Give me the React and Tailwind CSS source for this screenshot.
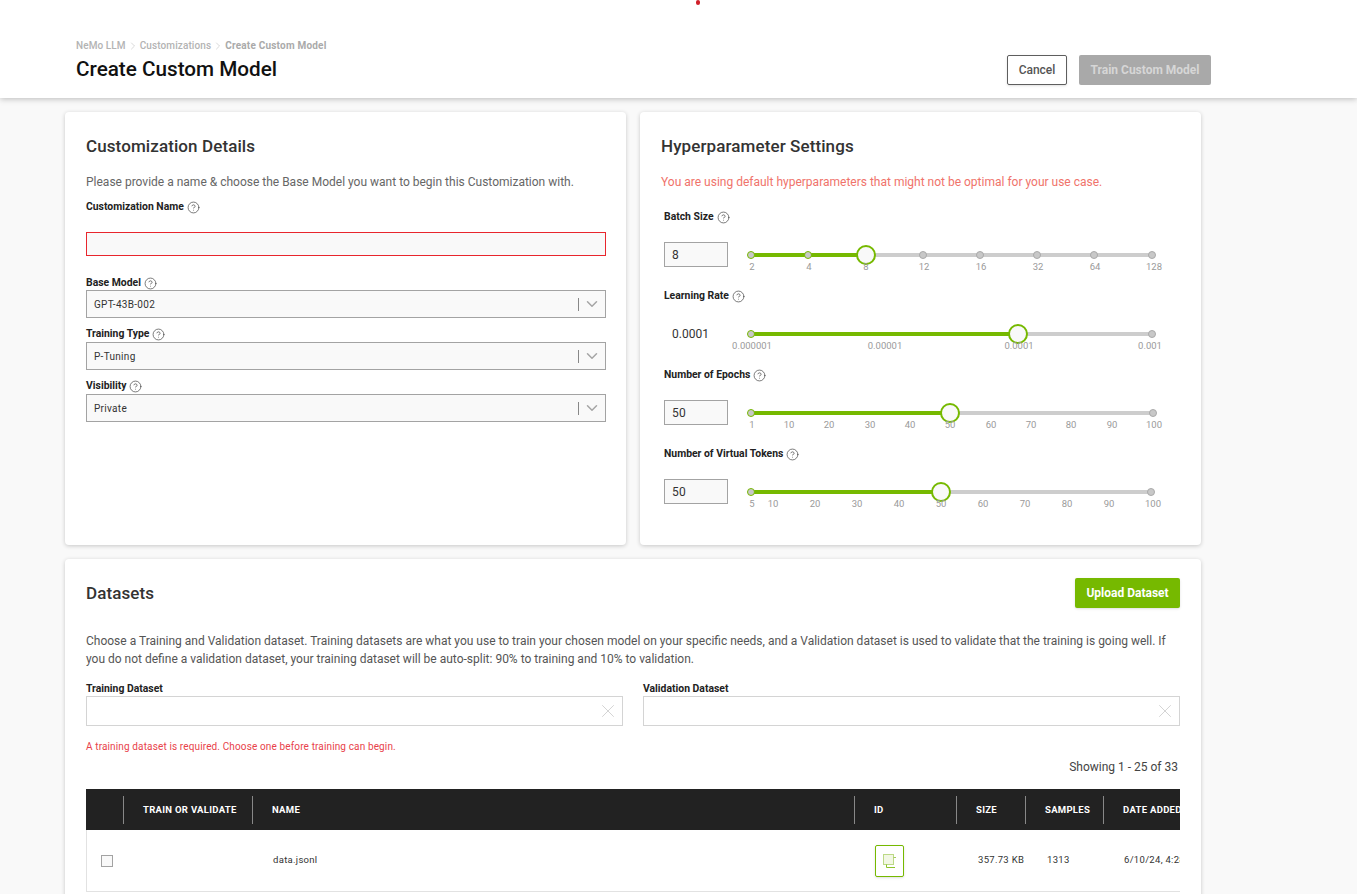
import React from "react";
import { ChevronRight, ChevronDown, CircleHelp, X } from "lucide-react";

const font = { fontFamily: "Roboto, sans-serif" };

const Help = () => <CircleHelp size={13} strokeWidth={1.3} className="text-[#444] ml-[3px] shrink-0" />;

const Label = ({ children, className = "" }) => (
  <div className={`flex items-center text-[10.4px] leading-[14px] font-bold text-[#222] ${className}`}>
    {children}
    <Help />
  </div>
);

const Select = ({ value }) => (
  <div className="flex items-center h-[28px] border border-[#a3a3a3] bg-[#f9f9f9] pl-[7px] text-[10px] tracking-[0.3px] text-[#333]">
    <span className="flex-1">{value}</span>
    <span className="w-px h-[13px] bg-[#888]" />
    <ChevronDown size={18} strokeWidth={2} className="text-[#a5a5a5] mx-[4px]" />
  </div>
);

const pct = (x, from, to) => ((x - from) / (to - from)) * 100;

// x values below are page pixels, turned into percentages of the track
const Slider = ({ from, to, thumb, marks, labels }) => (
  <div className="relative h-[30px]" style={{ width: to - from }}>
    <div className="absolute left-0 right-0 top-[8px] h-[4px] bg-[#cdcdcd]" />
    <div className="absolute left-0 top-[8px] h-[4px] bg-[#76b900]" style={{ width: `${pct(thumb, from, to)}%` }} />
    {marks.map((m) => (
      <span
        key={m}
        className={`absolute top-[6px] w-[8px] h-[8px] -ml-[4px] rounded-full bg-[#c8c8c8] border ${m <= thumb ? "border-[#76b900]" : "border-[#aaa]"}`}
        style={{ left: `${pct(m, from, to)}%` }}
      />
    ))}
    <span
      className="absolute top-0 w-[20px] h-[20px] -ml-[10px] rounded-full bg-[#f9f9f9] border-2 border-[#76b900]"
      style={{ left: `${pct(thumb, from, to)}%` }}
    />
    {labels.map(([t, x]) => (
      <span
        key={t}
        className="absolute top-[16px] -translate-x-1/2 text-[9.5px] leading-[12px] text-[#9a9a9a]"
        style={{ left: `${pct(x, from, to)}%` }}
      >
        {t}
      </span>
    ))}
  </div>
);

const ParamRow = ({ label, value, boxed = true, ...slider }) => (
  <div>
    <Label className="ml-[3px]">{label}</Label>
    <div className="flex items-start mt-[19px]">
      {boxed ? (
        <div className="w-[64px] h-[25px] border border-[#a3a3a3] bg-[#f9f9f9] pl-[7px] flex items-center text-[12px] text-[#333] tracking-[0.2px] mt-[-1px] ml-[3px]">
          {value}
        </div>
      ) : (
        <div className="w-[64px] h-[25px] pl-[8px] ml-[3px] flex items-center text-[12px] text-[#333] -mt-[1px]">{value}</div>
      )}
      <div className="ml-[23px] mt-[2px]">
        <Slider {...slider} />
      </div>
    </div>
  </div>
);

const Clearable = ({ label }) => (
  <div>
    <div className="text-[10.4px] leading-[14px] font-bold text-[#222]">{label}</div>
    <div className="h-[30px] border border-[#d4d4d4] bg-white flex items-center justify-end pr-[3px]">
      <X size={22} strokeWidth={0.7} className="text-[#bbb]" />
    </div>
  </div>
);

const columns = ["", "TRAIN OR VALIDATE", "NAME", "ID", "SIZE", "SAMPLES", "DATE ADDED"];

const CopyIcon = () => (
  <svg width="16" height="16" viewBox="0 0 16 16" fill="none">
    <rect x="1.5" y="1.5" width="10" height="10" fill="#f2f7e4" stroke="#bcd985" />
    <path d="M11.5 4.5H14" stroke="#a5cc5c" />
    <path d="M4.5 11.5v3H13" stroke="#8cc329" />
  </svg>
);

export default function App() {
  return (
    <div className="h-screen overflow-hidden bg-[#f9f9f9] relative" style={font}>
      <span className="absolute z-10 left-[696px] top-0 w-[4px] h-[5px] rounded-full bg-[#d0202a]" />

      <header className="h-[98px] bg-white shadow-[0_1px_6px_rgba(0,0,0,0.25)] flex items-end justify-between pl-[76px] pr-[146px] pb-[13px] relative">
        <div className="pb-[3px]">
          <div className="flex items-center text-[10px] font-medium text-[#b3b3b3] tracking-[0.1px] leading-[12px]">
            NeMo LLM
            <ChevronRight size={12} strokeWidth={1} className="mx-[1px]" />
            Customizations
            <ChevronRight size={12} strokeWidth={1} className="mx-[1px]" />
            <span className="font-bold text-[#aaa] tracking-[0.2px]">Create Custom Model</span>
          </div>
          <h1 className="text-[20.7px] leading-[26px] mt-[4px] font-medium text-[#111]">Create Custom Model</h1>
        </div>
        <div className="flex gap-[12px]">
          <button className="w-[60px] h-[30px] bg-white border border-[#5e5e5e] rounded-[2px] shadow-sm text-[12px] font-medium text-[#555]">
            Cancel
          </button>
          <button className="w-[132px] h-[30px] bg-[#a9a9a9] rounded-[2px] text-[12px] font-bold text-[#d6d6d6]">
            Train Custom Model
          </button>
        </div>
      </header>

      <main className="w-[1136px] ml-[65px] mt-[14px] flex flex-col gap-[14px]">
        <div className="grid grid-cols-2 gap-[14px]">
          <section className="h-[433px] bg-white rounded-[4px] shadow-[0_1px_4px_rgba(0,0,0,0.2)] pl-[21px] pr-[20px] pt-[24px]">
            <h2 className="text-[17px] leading-[20px] font-medium text-[#333] tracking-[0.1px]">Customization Details</h2>
            <p className="text-[12px] leading-[16px] text-[#666] mt-[18px]">
              Please provide a name &amp; choose the Base Model you want to begin this Customization with.
            </p>
            <Label className="mt-[10px]">Customization Name</Label>
            <div className="h-[24px] mt-[18px] border border-[#e8262d] bg-[#f9f9f9]" />
            <Label className="mt-[20px]">Base Model</Label>
            <Select value="GPT-43B-002" />
            <Label className="mt-[9px] mb-[1px]">Training Type</Label>
            <Select value="P-Tuning" />
            <Label className="mt-[9px] mb-[1px]">Visibility</Label>
            <Select value="Private" />
          </section>

          <section className="h-[433px] bg-white rounded-[4px] shadow-[0_1px_4px_rgba(0,0,0,0.2)] px-[21px] pt-[24px]">
            <h2 className="text-[17px] leading-[20px] font-medium text-[#333] tracking-[0.1px]">Hyperparameter Settings</h2>
            <p className="text-[12px] leading-[16px] text-[#f0736b] mt-[18px]">
              You are using default hyperparameters that might not be optimal for your use case.
            </p>
            <div className="mt-[20px] flex flex-col gap-[14px]">
              <ParamRow
                label="Batch Size"
                value="8"
                from={751}
                to={1152}
                thumb={866}
                marks={[751, 808, 923, 980, 1037, 1094, 1152]}
                labels={[["2", 752], ["4", 809], ["8", 866], ["12", 924], ["16", 981], ["32", 1038], ["64", 1095], ["128", 1154]]}
              />
              <ParamRow
                label="Learning Rate"
                value="0.0001"
                boxed={false}
                from={751}
                to={1152}
                thumb={1018}
                marks={[751, 1152]}
                labels={[["0.000001", 752], ["0.00001", 885], ["0.0001", 1019], ["0.001", 1150]]}
              />
              <ParamRow
                label="Number of Epochs"
                value="50"
                from={751}
                to={1153}
                thumb={950}
                marks={[751, 1153]}
                labels={[["1", 752], ["10", 789], ["20", 829], ["30", 870], ["40", 910], ["50", 950], ["60", 991], ["70", 1031], ["80", 1071], ["90", 1112], ["100", 1154]]}
              />
              <ParamRow
                label="Number of Virtual Tokens"
                value="50"
                from={751}
                to={1151}
                thumb={941}
                marks={[751, 1151]}
                labels={[["5", 752], ["10", 773], ["20", 815], ["30", 857], ["40", 899], ["50", 941], ["60", 983], ["70", 1025], ["80", 1067], ["90", 1109], ["100", 1153]]}
              />
            </div>
          </section>
        </div>

        <section className="h-[400px] bg-white rounded-[4px] shadow-[0_1px_4px_rgba(0,0,0,0.2)] px-[21px] pt-[19px]">
          <div className="flex items-center justify-between">
            <h2 className="text-[17px] leading-[20px] font-medium text-[#333] tracking-[0.1px]">Datasets</h2>
            <button className="w-[105px] h-[30px] bg-[#76b900] rounded-[2px] shadow-sm text-[12px] font-bold text-white">
              Upload Dataset
            </button>
          </div>
          <p className="text-[12px] leading-[18px] text-[#555] mt-[24px]">
            Choose a Training and Validation dataset. Training datasets are what you use to train your chosen model on your specific needs, and a Validation dataset is used to validate that the training is going well. If you do not define a validation dataset, your training dataset will be auto-split: 90% to training and 10% to validation.
          </p>
          <div className="grid grid-cols-2 gap-[20px] mt-[14px]">
            <Clearable label="Training Dataset" />
            <Clearable label="Validation Dataset" />
          </div>
          <p className="text-[10px] leading-[12px] text-[#e8424a] mt-[15px] tracking-[0.13px]">
            A training dataset is required. Choose one before training can begin.
          </p>
          <p className="text-[12px] leading-[16px] text-[#444] text-right pr-[2px] mt-[6px]">Showing 1 - 25 of 33</p>

          <div className="overflow-hidden mt-[14px]">
            <div className="w-[1200px] grid grid-cols-[38px_129px_602px_102px_69px_78px_182px] h-[41px] bg-[#222] items-center">
              {columns.map((c, i) => (
                <div key={i} className={`h-[28px] flex items-center pl-[19px] pt-px text-[9.5px] font-bold tracking-[0.3px] text-white whitespace-nowrap ${i < 6 ? "border-r border-[#888]" : ""}`}>
                  {c}
                </div>
              ))}
            </div>
            <div className="w-[1200px] grid grid-cols-[37px_129px_602px_102px_69px_78px_182px] h-[62px] items-center border-b border-l border-[#e2e2e2] text-[9.5px] tracking-[0.3px] text-[#333]">
              <div className="pl-[14px]">
                <span className="block w-[12px] h-[12px] border border-[#a3a3a3] bg-[#f9f9f9]" />
              </div>
              <div />
              <div className="pl-[20px]">data.jsonl</div>
              <div className="pl-[20px]">
                <button className="w-[29px] h-[32px] flex items-center justify-center bg-white border border-[#76b900] rounded-[2px] shadow-sm">
                  <CopyIcon />
                </button>
              </div>
              <div className="pl-[21px]">357.73 KB</div>
              <div className="pl-[21px]">1313</div>
              <div className="pl-[20px] whitespace-nowrap">6/10/24, 4:28 PM</div>
            </div>
          </div>
        </section>
      </main>
    </div>
  );
}
